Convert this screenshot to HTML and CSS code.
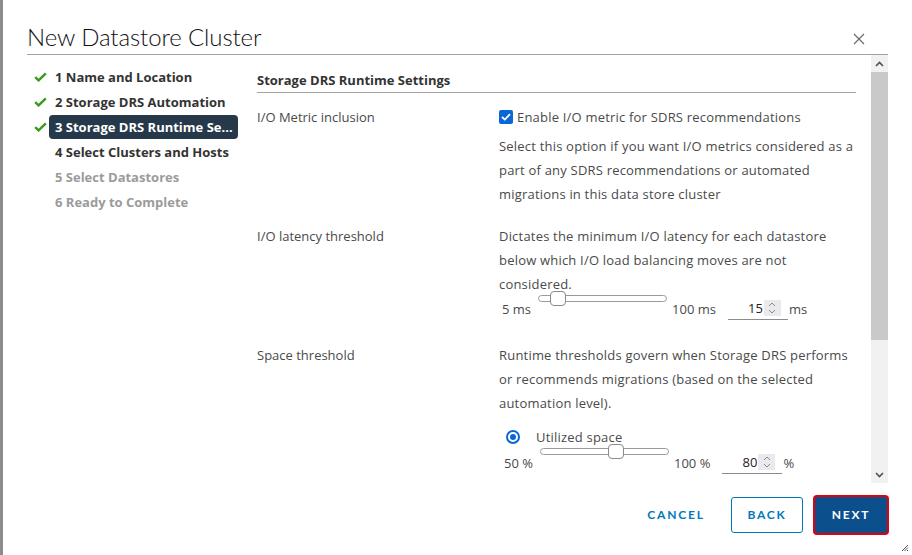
FILE: index.html
```html
<!DOCTYPE html>
<html>
<head>
<meta charset="utf-8">
<link rel="stylesheet" href="styles.css">
</head>
<body>
<div class="dialog">
  <header class="head">
    <h1 class="title">New Datastore Cluster</h1>
    <button class="close" aria-label="Close">
      <svg width="12" height="12" viewBox="0 0 12 12"><path d="M1 1 L11 11 M11 1 L1 11" stroke="#666" stroke-width="1.1" fill="none"/></svg>
    </button>
  </header>
  <div class="body">
    <nav class="steps">
      <div class="step done"><span class="chk"><svg width="13" height="10" viewBox="0 0 13 10"><path d="M1.2 5.2 L4.6 8.4 L11.8 1.4" stroke="#3a9a1c" stroke-width="2.4" fill="none"/></svg></span><span class="link">1 Name and Location</span></div>
      <div class="step done"><span class="chk"><svg width="13" height="10" viewBox="0 0 13 10"><path d="M1.2 5.2 L4.6 8.4 L11.8 1.4" stroke="#3a9a1c" stroke-width="2.4" fill="none"/></svg></span><span class="link">2 Storage DRS Automation</span></div>
      <div class="step done active"><span class="chk"><svg width="13" height="10" viewBox="0 0 13 10"><path d="M1.2 5.2 L4.6 8.4 L11.8 1.4" stroke="#3a9a1c" stroke-width="2.4" fill="none"/></svg></span><span class="link">3 Storage DRS Runtime Se...</span></div>
      <div class="step"><span class="chk"></span><span class="link">4 Select Clusters and Hosts</span></div>
      <div class="step disabled"><span class="chk"></span><span class="link">5 Select Datastores</span></div>
      <div class="step disabled"><span class="chk"></span><span class="link">6 Ready to Complete</span></div>
    </nav>
    <div class="pane">
      <div class="content">
        <h2 class="section">Storage DRS Runtime Settings</h2>

        <div class="row r1">
          <div class="label">I/O Metric inclusion</div>
          <div class="value">
            <label class="check"><span class="box"><svg width="10" height="8" viewBox="0 0 10 8"><path d="M1 4 L3.8 6.6 L9 1.2" stroke="#fff" stroke-width="1.8" fill="none"/></svg></span>Enable I/O metric for SDRS recommendations</label>
            <p class="para">Select this option if you want I/O metrics considered as a<br>part of any SDRS recommendations or automated<br>migrations in this data store cluster</p>
          </div>
        </div>

        <div class="row r2">
          <div class="label">I/O latency threshold</div>
          <div class="value">
            <p class="para p2">Dictates the minimum I/O latency for each datastore<br>below which I/O load balancing moves are not<br>considered.</p>
            <div class="slider-row s1">
              <span class="min">5 ms</span>
              <span class="slider"><span class="track"></span><span class="thumb" style="left:12px"></span></span>
              <span class="max">100 ms</span>
              <span class="num"><span class="val">15</span><span class="spin"><svg width="10" height="14" viewBox="0 0 10 14"><path d="M2 5 L5 2 L8 5 M2 9 L5 12 L8 9" stroke="#8a8a8a" stroke-width="1" fill="none"/></svg></span></span>
              <span class="unit">ms</span>
            </div>
          </div>
        </div>

        <div class="row r3">
          <div class="label">Space threshold</div>
          <div class="value">
            <p class="para p3">Runtime thresholds govern when Storage DRS performs<br>or recommends migrations (based on the selected<br>automation level).</p>
            <label class="radio"><span class="dot"></span>Utilized space</label>
            <div class="slider-row s2">
              <span class="min">50 %</span>
              <span class="slider"><span class="track"></span><span class="thumb" style="left:68px"></span></span>
              <span class="max">100 %</span>
              <span class="num"><span class="val">80</span><span class="spin"><svg width="10" height="14" viewBox="0 0 10 14"><path d="M2 5 L5 2 L8 5 M2 9 L5 12 L8 9" stroke="#8a8a8a" stroke-width="1" fill="none"/></svg></span></span>
              <span class="unit">%</span>
            </div>
          </div>
        </div>
      </div>
      <div class="scrollbar">
        <span class="arrow up"><svg width="9" height="6" viewBox="0 0 9 6"><path d="M1 5 L4.5 1.5 L8 5" stroke="#505050" stroke-width="1.6" fill="none"/></svg></span>
        <span class="thumbbar"></span>
        <span class="rest"></span>
        <span class="arrow down"><svg width="9" height="6" viewBox="0 0 9 6"><path d="M1 1 L4.5 4.5 L8 1" stroke="#505050" stroke-width="1.6" fill="none"/></svg></span>
      </div>
    </div>
  </div>
  <footer class="foot">
    <button class="btn flat">CANCEL</button>
    <button class="btn outline">BACK</button>
    <button class="btn primary">NEXT</button>
    <svg class="grip" width="8" height="8" viewBox="0 0 8 8"><path d="M7 1 L1 7 M7 3.5 L3.5 7 M7 6 L6 7" stroke="#555" stroke-width="1"/></svg>
  </footer>
</div>
</body>
</html>
```

FILE: styles.css
```css
* { box-sizing: border-box; }
html, body { margin: 0; padding: 0; }
body {
  width: 912px;
  height: 555px;
  background: #8d8d8d;
  font-family: "Open Sans", "Lato", sans-serif;
  overflow: hidden;
}
.dialog {
  margin-left: 3px;
  width: 909px;
  height: 555px;
  background: #fff;
  display: flex;
  flex-direction: column;
  position: relative;
}
.head {
  margin: 0 24px 0 24px;
  height: 55px;
  border-bottom: 1px solid #a3a3a3;
  display: flex;
  align-items: flex-end;
  justify-content: space-between;
}
.title {
  margin: 0 0 2px 0;
  font-family: "Lato", "Open Sans", sans-serif;
  font-size: 24px;
  font-weight: 300;
  color: #111;
  line-height: 30px;
  letter-spacing: -0.1px;
}
.close {
  border: 0;
  background: none;
  padding: 0;
  margin: 0 23px 9px 0;
  width: 12px;
  height: 12px;
  display: flex;
}
.body {
  height: 428px;
  display: flex;
}
.steps {
  width: 237px;
  padding: 10px 0 0 31px;
}
.step {
  display: flex;
  align-items: center;
  height: 24px;
  margin-bottom: 1px;
}
.chk {
  width: 15px;
  display: flex;
  align-items: center;
}
.link {
  height: 24px;
  line-height: 24px;
  width: 189px;
  padding: 0 6px;
  font-size: 13px;
  font-weight: 700;
  color: #333;
  white-space: nowrap;
  overflow: hidden;
  border-radius: 4px;
}
.active .link {
  background: #26394a;
  color: #fff;
}
.disabled .link { color: #9b9b9b; }
.pane {
  flex: 1;
  display: flex;
  padding-left: 17px;
  margin-right: 24px;
}
.content {
  flex: 1;
  padding: 13px 15px 0 0;
  color: #4a4a4a;
  font-size: 13px;
}
.section {
  margin: 0;
  font-size: 13px;
  font-weight: 700;
  color: #333;
  line-height: 24px;
  border-bottom: 1px solid #a3a3a3;
}
.row {
  display: flex;
}
.r1 { margin-top: 12px; }
.r2 { margin-top: 18px; }
.r3 { margin-top: 23px; }
.label {
  width: 242px;
  line-height: 24px;
}
.value {
  flex: 1;
  letter-spacing: 0.2px;
}
.check {
  display: flex;
  align-items: center;
  height: 24px;
  white-space: nowrap;
}
.box {
  width: 14px;
  height: 14px;
  border-radius: 2px;
  background: #0b66d6;
  display: flex;
  align-items: center;
  justify-content: center;
  margin-right: 4px;
}
.para {
  margin: 5px 0 0 0;
  line-height: 24px;
  color: #4a4a4a;
  white-space: nowrap;
}
.p2, .p3 { margin-top: 0; }
.slider-row {
  display: flex;
  height: 30px;
  margin-top: -6px;
  position: relative;
  letter-spacing: 0;
}
.slider-row .min, .slider-row .max, .slider-row .unit {
  align-self: flex-end;
  line-height: 22px;
}
.s1 .min { margin-left: 3px; }
.s2 .min { margin-left: 5px; }
.slider {
  position: relative;
  width: 129px;
  height: 16px;
  margin: 1px 5px 0 7px;
}
.s2 .slider { margin-top: 0; margin-right: 5px; }
.track {
  position: absolute;
  left: 0;
  right: 0;
  top: 4px;
  height: 7px;
  border: 1px solid #9a9a9a;
  border-radius: 4px;
  background: #fff;
}
.thumb {
  position: absolute;
  top: 0;
  width: 16px;
  height: 15px;
  border: 1px solid #8a8a8a;
  border-radius: 4px;
  background: #fff;
}
.num {
  align-self: flex-end;
  width: 60px;
  height: 24px;
  border-bottom: 1px solid #8c8c8c;
  display: flex;
  justify-content: flex-end;
  align-items: center;
  margin-left: 12px;
  margin-right: 1px;
  color: #222;
}
.s2 .num { margin-left: 12px; }
.val { margin-right: 1px; }
.spin {
  width: 17px;
  height: 16px;
  background: #e9e9ee;
  display: flex;
  align-items: center;
  justify-content: center;
  margin-right: 7px;
}
.radio {
  display: flex;
  align-items: center;
  height: 24px;
  margin-top: 10px;
  padding-left: 7px;
}
.dot {
  width: 14px;
  height: 14px;
  border-radius: 50%;
  border: 2px solid #0b66d6;
  margin-right: 16px;
  display: flex;
  align-items: center;
  justify-content: center;
}
.dot::after {
  content: "";
  width: 6px;
  height: 6px;
  border-radius: 50%;
  background: #0b66d6;
}
.s2 { margin-top: -5px; height: 30px; }
.scrollbar {
  width: 17px;
  background: #f1f1f1;
  display: flex;
  flex-direction: column;
}
.arrow {
  height: 17px;
  display: flex;
  align-items: center;
  justify-content: center;
}
.thumbbar {
  height: 268px;
  background: #c9c9c9;
}
.rest { flex: 1; }
.foot {
  flex: 1;
  display: flex;
  align-items: center;
  justify-content: flex-end;
  padding: 0 25px 9px 0;
  position: relative;
}
.btn {
  font-family: "Lato", "Open Sans", sans-serif;
  font-size: 12px;
  font-weight: 700;
  letter-spacing: 1.8px;
  height: 36px;
  border-radius: 3px;
  padding: 0;
  cursor: pointer;
}
.flat {
  border: 0;
  background: none;
  color: #0079b8;
  width: 84px;
  margin-right: 13px;
}
.outline {
  border: 1px solid #0079b8;
  background: #fff;
  color: #0079b8;
  width: 72px;
  margin-right: 12px;
}
.primary {
  border: 0;
  border-radius: 2px;
  background: #0b4f8c;
  color: #fff;
  width: 72px;
  box-shadow: 0 0 0 2px #e3000b;
}
.grip {
  position: absolute;
  right: 3px;
  bottom: 3px;
}
```
